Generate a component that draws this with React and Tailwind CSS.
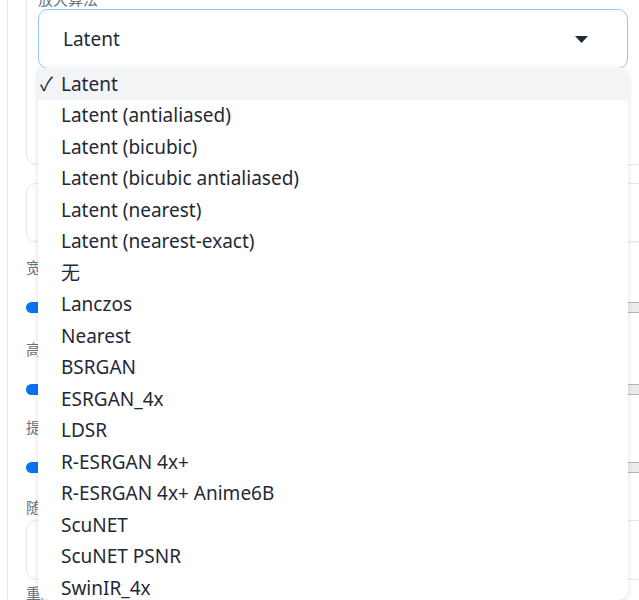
import React from "react";

const FONT = "font-['Noto_Sans','Noto_Sans_CJK_SC',sans-serif]";

const OPTIONS = [
  "Latent",
  "Latent (antialiased)",
  "Latent (bicubic)",
  "Latent (bicubic antialiased)",
  "Latent (nearest)",
  "Latent (nearest-exact)",
  "无",
  "Lanczos",
  "Nearest",
  "BSRGAN",
  "ESRGAN_4x",
  "LDSR",
  "R-ESRGAN 4x+",
  "R-ESRGAN 4x+ Anime6B",
  "ScuNET",
  "ScuNET PSNR",
  "SwinIR_4x",
];

// native-looking range track behind the dropdown
const Slider = ({ className }) => (
  <div className={`flex h-[11px] w-[640px] ${className}`}>
    <div className="h-full w-[120px] rounded-l-full bg-[#0b72ef]" />
    <div className="h-full flex-1 border-y border-[#b4b4b4] bg-[#ececec]" />
  </div>
);

const Label = ({ children, className }) => (
  <div className={`h-[20px] text-[15px] leading-[20px] text-[#6b7280] ${className}`}>
    {children}
  </div>
);

const Dropdown = ({ selected }) => (
  <ul className="absolute left-[38px] top-[68px] h-[532px] w-[590px] overflow-hidden rounded-b-[10px] rounded-tr-[10px] bg-white shadow-[0_2px_6px_rgba(0,0,0,0.12)]">
    {OPTIONS.map((opt) => (
      <li
        key={opt}
        className={`flex h-[31.5px] items-center pl-[2px] text-[19px] text-[#1f2937] ${
          opt === selected ? "bg-[#f3f4f6]" : ""
        }`}
      >
        <span className="w-[21px]">{opt === selected ? "✓" : ""}</span>
        <span>{opt}</span>
      </li>
    ))}
  </ul>
);

export default function App() {
  return (
    <div className={`relative h-[600px] w-[639px] overflow-hidden bg-white ${FONT}`}>
      <div className="ml-[7px] min-h-[600px] border-l border-[#e5e7eb] pl-[18px]">
        {/* upscaler box */}
        <div className="-mt-[20px] h-[185px] w-[640px] rounded-[10px] border border-[#e5e7eb] px-[11px] pt-[8px]">
          <div className="h-[20px] text-[15px] leading-[20px] text-[#6b7280]">放大算法</div>
          <div className="flex h-[60px] w-[590px] items-center justify-between rounded-[10px] border border-[#93c5fd] pl-[24px] pr-[39px] text-[19px] text-[#1f2937]">
            <span>Latent</span>
            <svg width="13" height="7" viewBox="0 0 13 7">
              <path d="M0 0h13L6.5 7z" fill="#1f2937" />
            </svg>
          </div>
        </div>

        <div className="mt-[18px] h-[59px] w-[640px] rounded-[10px] border border-[#e5e7eb] shadow-[0_1px_2px_rgba(0,0,0,0.05)]" />

        <Label className="mt-[15px]">宽度</Label>
        <Slider className="mt-[25px]" />
        <Label className="mt-[26px]">高度</Label>
        <Slider className="mt-[25px]" />
        <Label className="mt-[22px]">提示词引导系数</Label>
        <Slider className="mt-[25px]" />
        <Label className="mt-[24px]">随机种子</Label>
        <div className="mt-[3px] h-[60px] w-[640px] rounded-[10px] border border-[#e5e7eb]" />
        <Label className="mt-[3px]">重绘幅度</Label>
      </div>

      <Dropdown selected="Latent" />
    </div>
  );
}
